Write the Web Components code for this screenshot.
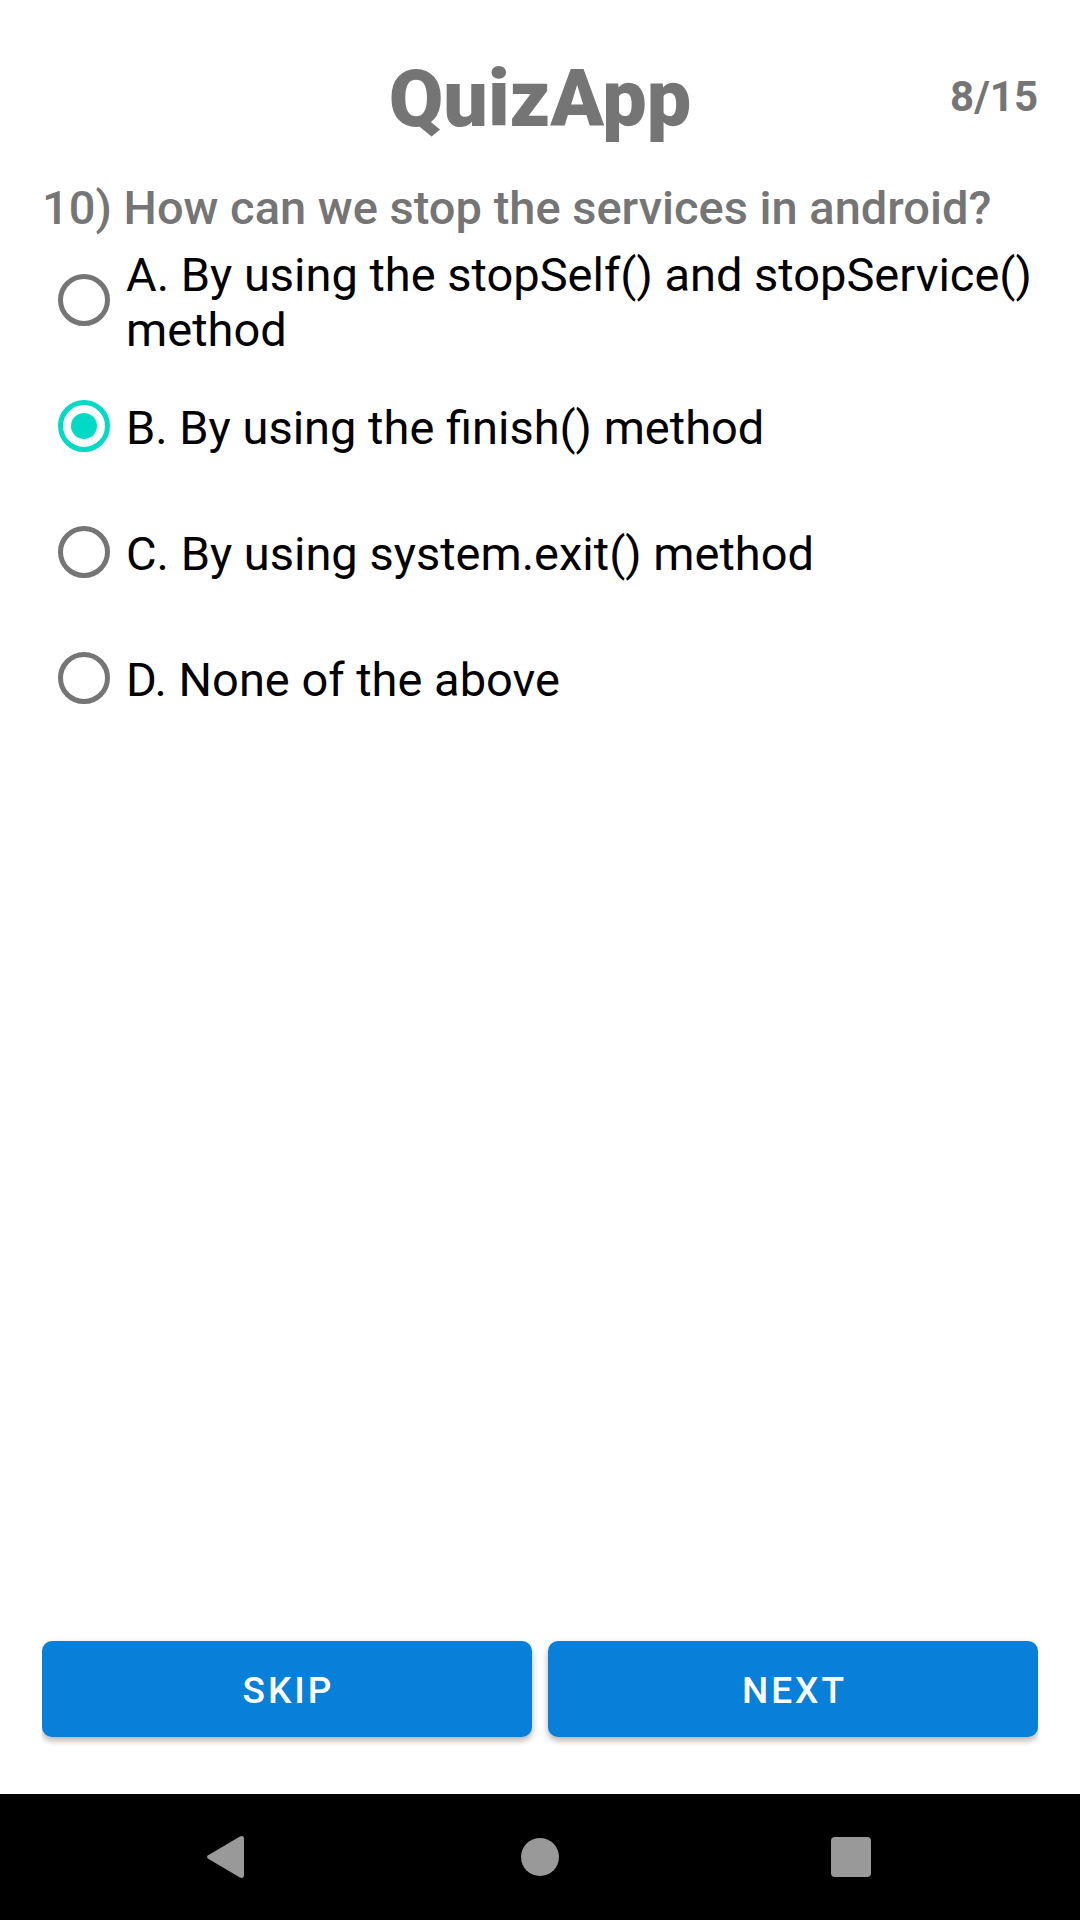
<!DOCTYPE html>
<html lang="en">
<head>
<meta charset="utf-8">
<meta name="viewport" content="width=device-width, initial-scale=1">
<title>QuizApp</title>
<style>
  body {
    margin: 0;
    background: #fff;
    color: #757575;
    font-family: Roboto, "Liberation Sans", sans-serif;
  }
</style>
</head>
<body>
<quiz-screen>
  <quiz-header slot="header">
    <span>QuizApp</span>
    <span slot="progress">8/15</span>
  </quiz-header>
  <quiz-question selected="1">
    <span slot="question">10) How can we stop the services in android?</span>
    <span class="choice">A. By using the stopSelf() and stopService() method</span>
    <span class="choice">B. By using the finish() method</span>
    <span class="choice">C. By using system.exit() method</span>
    <span class="choice">D. None of the above</span>
  </quiz-question>
  <quiz-actions slot="actions">
    <quiz-button>SKIP</quiz-button>
    <quiz-button>NEXT</quiz-button>
  </quiz-actions>
  <system-nav slot="nav"></system-nav>
</quiz-screen>

<script>
  const define = (name, html, setup) => {
    const template = document.createElement('template');
    template.innerHTML = html;
    customElements.define(name, class extends HTMLElement {
      constructor() {
        super();
        this.attachShadow({ mode: 'open' }).append(template.content.cloneNode(true));
      }
      connectedCallback() {
        if (setup && !this.ready) {
          this.ready = true;
          setup(this, this.shadowRoot);
        }
      }
    });
  };

  define('quiz-screen', `
    <style>
      :host { display: flex; flex-direction: column; min-height: 100vh; }
      main { flex: 1; display: flex; flex-direction: column; padding: 47px 42px 57px; }
      .body { flex: 1; padding: 34px 0; }
    </style>
    <main>
      <slot name="header"></slot>
      <div class="body"><slot></slot></div>
      <slot name="actions"></slot>
    </main>
    <slot name="nav"></slot>
  `);

  define('quiz-header', `
    <style>
      :host { display: grid; grid-template-columns: 1fr auto 1fr; align-items: center; }
      h1 { grid-column: 2; margin: 0; padding-top: 6px; font-size: 79px; line-height: 93px; font-weight: 900; }
      p { margin: 0; justify-self: end; font-size: 42px; line-height: 49px; font-weight: 700; }
    </style>
    <h1><slot></slot></h1>
    <p><slot name="progress"></slot></p>
  `);

  define('quiz-question', `
    <style>
      :host { display: block; font-size: 47px; line-height: 55px; }
      fieldset { margin: 0; padding: 0; border: 0; min-width: 0; }
      legend { padding: 0 0 2px; font-weight: 500; }
      .choice { display: flex; align-items: center; gap: 16px; min-height: 126px; padding-left: 16px; }
      label { flex: 1; padding-top: 3px; color: #000; }
      input {
        appearance: none; flex: none; display: grid; place-items: center;
        width: 52px; height: 52px; margin: 0; box-sizing: border-box;
        border: 5px solid #757575; border-radius: 50%;
      }
      input:checked { border-color: #03dac5; }
      input:checked::before { content: ""; width: 26px; height: 26px; border-radius: 50%; background: #03dac5; }
    </style>
    <fieldset>
      <legend><slot name="question"></slot></legend>
    </fieldset>
  `, (host, root) => {
    const fieldset = root.querySelector('fieldset');
    const selected = Number(host.getAttribute('selected'));
    host.querySelectorAll('.choice').forEach((text, i) => {
      text.slot = 'choice-' + i;
      const row = document.createElement('div');
      row.className = 'choice';
      row.innerHTML = `<input type="radio" name="answer" id="answer-${i}" value="${i}">
        <label for="answer-${i}"><slot name="choice-${i}"></slot></label>`;
      row.querySelector('input').checked = i === selected;
      fieldset.append(row);
    });
  });

  define('quiz-actions', `
    <style>
      :host { display: flex; gap: 16px; overflow-x: clip; }
      ::slotted(*) { flex: 1; }
    </style>
    <slot></slot>
  `);

  define('quiz-button', `
    <style>
      :host { display: block; }
      button {
        display: block; width: 100%; height: 96px; padding: 2px 42px 0 45px;
        border: 0; border-radius: 10px; background: #0880d9; color: #fff;
        box-shadow: 0 4px 6px rgba(0, 0, 0, .26), 0 1px 8px rgba(0, 0, 0, .06);
        font: 500 37px/43px Roboto, "Liberation Sans", sans-serif;
        letter-spacing: 3px;
      }
    </style>
    <button type="button"><slot></slot></button>
  `);

  define('system-nav', `
    <style>
      :host { display: block; background: #000; }
      nav { display: flex; justify-content: center; }
      button { width: 311px; height: 126px; padding: 0; border: 0; background: none; display: grid; place-items: center; }
      svg { display: block; width: 48px; height: 48px; fill: #999; }
    </style>
    <nav aria-label="System">
      <button type="button" aria-label="Back"><svg viewBox="0 0 48 48"><path d="M3.200 22.200 L34.500 3.700 Q39 1.500 39 6 V42 Q39 46.500 34.500 44.300 L3.200 25.800 Q0.800 24 3.200 22.200Z"/></svg></button>
      <button type="button" aria-label="Home"><svg viewBox="0 0 48 48"><circle cx="24" cy="24" r="19"/></svg></button>
      <button type="button" aria-label="Recent apps"><svg viewBox="0 0 48 48"><rect x="4" y="4" width="40" height="40" rx="4"/></svg></button>
    </nav>
  `);
</script>
</body>
</html>
